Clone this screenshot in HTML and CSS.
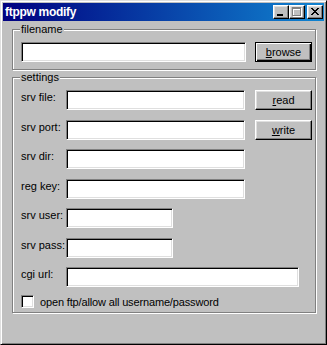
FILE: index.html
```html
<!DOCTYPE HTML>
<html>
<head>
    <meta charset="utf-8">
    <title>ftppw modify</title>
    <link rel="stylesheet" href="styles.css">
</head>

<body>
    <div class='window'>
        <div class='title-bar'>
            <span class='title-text'>ftppw modify</span>
            <div class='title-buttons'>
                <div class='tb-btn'>
                    <svg width="14" height="12" viewBox="0 0 14 12" shape-rendering="crispEdges"><rect x="3" y="8" width="6" height="2" fill="#000"/></svg>
                </div>
                <div class='tb-btn'>
                    <svg width="14" height="12" viewBox="0 0 14 12" shape-rendering="crispEdges">
                        <path d="M3 2h9v9H3z M4 4v6h7V4z" fill="#fff" fill-rule="evenodd"/>
                        <path d="M2 1h9v9H2z M3 3v6h7V3z" fill="#808080" fill-rule="evenodd"/>
                    </svg>
                </div>
                <div class='tb-btn close'>
                    <svg width="14" height="12" viewBox="0 0 14 12" shape-rendering="crispEdges">
                        <path transform="translate(3 2)" fill="#000" d="M0 0h2v1h-2z M6 0h2v1h-2z M1 1h2v1h-2z M5 1h2v1h-2z M2 2h2v1h-2z M4 2h2v1h-2z M3 3h2v1h-2z M4 4h2v1h-2z M2 4h2v1h-2z M5 5h2v1h-2z M1 5h2v1h-2z M6 6h2v1h-2z M0 6h2v1h-2z"/>
                    </svg>
                </div>
            </div>
        </div>

        <div class='client'>
            <div class='group group-file'>
                <span class='legend'>filename</span>
                <div class='row'>
                    <input type="text" class='edit edit-file'>
                    <div class='btn default'><u>b</u>rowse</div>
                </div>
            </div>

            <div class='group group-settings'>
                <span class='legend'>settings</span>
                <div class='rows'>
                    <div class='row'>
                        <span class='label'>srv file:</span>
                        <input type="text" class='edit edit-mid'>
                        <div class='btn'><u>r</u>ead</div>
                    </div>
                    <div class='row'>
                        <span class='label'>srv port:</span>
                        <input type="text" class='edit edit-mid'>
                        <div class='btn'><u>w</u>rite</div>
                    </div>
                    <div class='row'>
                        <span class='label'>srv dir:</span>
                        <input type="text" class='edit edit-mid'>
                    </div>
                    <div class='row'>
                        <span class='label'>reg key:</span>
                        <input type="text" class='edit edit-mid'>
                    </div>
                    <div class='row'>
                        <span class='label'>srv user:</span>
                        <input type="text" class='edit edit-short'>
                    </div>
                    <div class='row'>
                        <span class='label'>srv pass:</span>
                        <input type="text" class='edit edit-short'>
                    </div>
                    <div class='row'>
                        <span class='label'>cgi url:</span>
                        <input type="text" class='edit edit-long'>
                    </div>
                </div>
                <div class='check-row'>
                    <span class='check'></span>
                    <span class='check-label'>open ftp/allow all username/password</span>
                </div>
            </div>
        </div>
    </div>
</body>
</html>
```

FILE: styles.css
```css
html, body{
    margin: 0;
    padding: 0;
}
body{
    font-family: "Liberation Sans", Arial, sans-serif;
    font-size: 11px;
    color: #000;
    background: #c0c0c0;
}
.window{
    box-sizing: border-box;
    width: 327px;
    height: 345px;
    background: #c0c0c0;
    border: 1px solid;
    border-color: #dfdfdf #000 #000 #dfdfdf;
    box-shadow: inset 1px 1px #fff, inset -1px -1px #808080;
    padding: 2px;
    display: flex;
    flex-direction: column;
}
.title-bar{
    height: 18px;
    display: flex;
    align-items: center;
    justify-content: space-between;
    padding: 0 1px 0 2px;
    background: linear-gradient(to right, #000080, #1084d0);
}
.title-text{
    color: #fff;
    font-weight: bold;
    font-size: 12px;
    letter-spacing: -0.3px;
}
.title-buttons{
    display: flex;
}
.tb-btn{
    box-sizing: border-box;
    width: 16px;
    height: 14px;
    background: #c0c0c0;
    border: 1px solid;
    border-color: #fff #000 #000 #fff;
    box-shadow: inset -1px -1px #808080, inset 1px 1px #dfdfdf;
}
.tb-btn svg{
    display: block;
}
.tb-btn.close{
    margin-left: 2px;
}
.client{
    padding: 8px 8px 0 9px;
}
.group{
    position: relative;
    border: 1px solid #808080;
    box-shadow: 1px 1px 0 #fff, inset 1px 1px 0 #fff;
}
.legend{
    position: absolute;
    top: -7px;
    left: 7px;
    padding: 0 1px;
    line-height: 13px;
    background: #c0c0c0;
}
.group-file{
    padding: 12px 3px 7px 8px;
}
.group-settings{
    margin-top: 7px;
    padding: 12px 3px 4px 8px;
}
.rows{
    display: flex;
    flex-direction: column;
    gap: 9.5px;
}
.row{
    display: flex;
    align-items: flex-start;
    height: 20px;
}
.label{
    width: 45px;
    line-height: 14px;
}
.edit{
    box-sizing: border-box;
    height: 20px;
    margin: 0;
    padding: 0 2px;
    font: inherit;
    background: #fff;
    border: 1px solid;
    border-color: #808080 #fff #fff #808080;
    box-shadow: inset 1px 1px #000, inset -1px -1px #dfdfdf;
    outline: none;
}
.edit-file{
    width: 225px;
}
.edit-mid{
    width: 179px;
}
.edit-short{
    width: 107px;
}
.edit-long{
    width: 233px;
}
.btn{
    box-sizing: border-box;
    width: 57px;
    height: 20px;
    margin-left: 10px;
    display: flex;
    align-items: center;
    justify-content: center;
    background: #c0c0c0;
    border: 1px solid;
    border-color: #fff #000 #000 #fff;
    box-shadow: inset -1px -1px #808080, inset 1px 1px #dfdfdf;
    font-size: 11px;
}
.btn.default{
    margin-left: 9px;
    border-color: #000;
    box-shadow: inset 1px 1px #fff, inset -1px -1px #000, inset -2px -2px #808080;
}
.check-row{
    display: flex;
    align-items: center;
    margin-top: 8px;
    height: 13px;
}
.check{
    box-sizing: border-box;
    width: 13px;
    height: 13px;
    background: #fff;
    border: 1px solid;
    border-color: #808080 #fff #fff #808080;
    box-shadow: inset 1px 1px #000, inset -1px -1px #dfdfdf;
}
.check-label{
    margin-left: 6px;
    letter-spacing: -0.15px;
}
```
